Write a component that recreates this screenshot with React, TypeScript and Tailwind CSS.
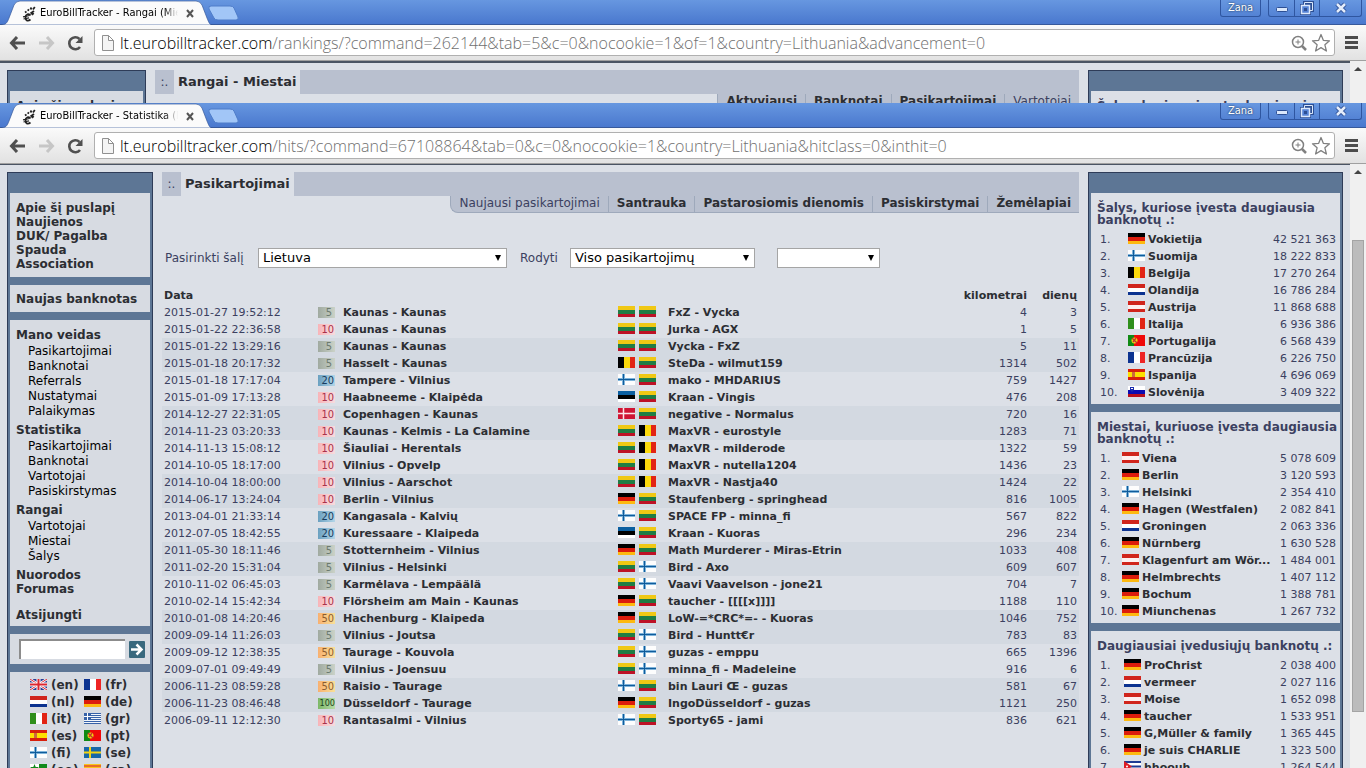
import React from 'react';

const flags: Record<string, React.ReactNode> = {
  lt: (
    <>
      <rect width="17" height="4" fill="#f0c814" />
      <rect y="4" width="17" height="4" fill="#1f7d44" />
      <rect y="8" width="17" height="3" fill="#bd1226" />
    </>
  ),
  be: (
    <>
      <rect width="6" height="11" fill="#000" />
      <rect x="6" width="6" height="11" fill="#fbd80b" />
      <rect x="12" width="5" height="11" fill="#e22414" />
    </>
  ),
  fi: (
    <>
      <rect width="17" height="11" fill="#fdfdfd" />
      <path d="M0 5.5h17M5.5 0v11" stroke="#7fb4da" strokeWidth="3" />
      <path d="M0 5.5h17M5.5 0v11" stroke="#0f5c9c" />
    </>
  ),
  ee: (
    <>
      <rect width="17" height="4" fill="#0b5fa0" />
      <rect y="4" width="17" height="4" fill="#000" />
      <rect y="8" width="17" height="3" fill="#fff" />
    </>
  ),
  dk: (
    <>
      <rect width="17" height="11" fill="#cf1433" />
      <path d="M0 5.5h17M5.5 0v11" stroke="#fbe4e8" strokeWidth="1.5" />
    </>
  ),
  de: (
    <>
      <rect width="17" height="4" fill="#000" />
      <rect y="4" width="17" height="4" fill="#dc1c0c" />
      <rect y="8" width="17" height="3" fill="#fdb910" />
    </>
  ),
  nl: (
    <>
      <rect width="17" height="4" fill="#d0251c" />
      <rect y="4" width="17" height="4" fill="#fff" />
      <rect y="8" width="17" height="3" fill="#0c3390" />
    </>
  ),
  at: (
    <>
      <rect width="17" height="4" fill="#d0251c" />
      <rect y="4" width="17" height="4" fill="#fdf0f0" />
      <rect y="8" width="17" height="3" fill="#d0251c" />
    </>
  ),
  it: (
    <>
      <rect width="6" height="11" fill="#2f8f1c" />
      <rect x="6" width="6" height="11" fill="#fff" />
      <rect x="12" width="5" height="11" fill="#e22414" />
    </>
  ),
  fr: (
    <>
      <rect width="6" height="11" fill="#0c3390" />
      <rect x="6" width="6" height="11" fill="#fff" />
      <rect x="12" width="5" height="11" fill="#ee2424" />
    </>
  ),
  es: (
    <>
      <rect width="17" height="11" fill="#d8200c" />
      <rect y="3" width="17" height="5" fill="#fde000" />
      <rect x="4" y="3" width="3" height="5" fill="#cc6a3c" />
    </>
  ),
  pt: (
    <>
      <rect width="17" height="11" fill="#f00808" />
      <rect width="6" height="11" fill="#108a14" />
      <circle cx="6.5" cy="5.5" r="3" fill="#f2d010" />
      <path d="M4 3l5 5M5 7l3-4" stroke="#c43030" strokeWidth="1.3" />
    </>
  ),
  si: (
    <>
      <rect width="17" height="4" fill="#fff" />
      <rect y="4" width="17" height="4" fill="#0b0bb0" />
      <rect y="8" width="17" height="3" fill="#b8101c" />
      <path d="M2 1h4v3l-2 2-2-2z" fill="#1b2cae" />
      <rect x="3" y="2" width="2" height="1" fill="#fff" />
    </>
  ),
  en: (
    <>
      <rect width="17" height="11" fill="#2b3f94" />
      <path d="M0 0l17 11M17 0L0 11" stroke="#fff" strokeWidth="2.4" />
      <path d="M0 0l17 11M17 0L0 11" stroke="#dc2630" />
      <path d="M0 5.5h17M8.5 0v11" stroke="#fff" strokeWidth="4" />
      <path d="M0 5.5h17M8.5 0v11" stroke="#dc2630" strokeWidth="2" />
    </>
  ),
  gr: (
    <>
      <rect width="17" height="11" fill="#f2f6fb" />
      <path d="M0 .5h17M0 2.5h17M0 4.5h17M0 6.5h17M0 8.5h17M0 10.5h17" stroke="#3862a8" />
      <rect width="7" height="7" fill="#3862a8" />
      <path d="M0 3.5h7M3.5 0v7" stroke="#fff" />
    </>
  ),
  se: (
    <>
      <rect width="17" height="11" fill="#1767a8" />
      <path d="M0 5.5h17M6 0v11" stroke="#f4d414" strokeWidth="2" />
    </>
  ),
  eo: (
    <>
      <rect width="17" height="11" fill="#128a1c" />
      <rect width="9" height="8" fill="#fff" />
      <path d="M4.5 0l1.2 3H9L6.5 5l1 3-3-2-3 2 1-3L0 3h3.300z" fill="#128a1c" />
    </>
  ),
  ca: (
    <>
      <rect width="17" height="11" fill="#f8c41c" />
      <path d="M0 2h17M0 5h17M0 8h17" stroke="#e2502c" strokeWidth="1.5" />
    </>
  ),
  cu: (
    <>
      <rect width="17" height="11" fill="#fff" />
      <path d="M0 1h17M0 5.5h17M0 10h17" stroke="#1c3c94" strokeWidth="2" />
      <path d="M0 0l8 5.5L0 11z" fill="#dc1c24" />
      <circle cx="3" cy="5.5" r="1" fill="#fff" />
    </>
  ),
};

const Flag = ({ code }: { code: string }) => (
  <svg width="17" height="11" viewBox="0 0 17 11" className="block shrink-0">
    {flags[code]}
  </svg>
);

const noteStyles: Record<number, string> = {
  5: 'from-[#a0aaa0] to-[#cad2c8] text-[#6c7a70] pr-[3px]',
  10: 'from-[#f8b4b8] to-[#f6dcdf] text-[#a8324c] pr-px',
  20: 'from-[#6aa0c0] to-[#b4d6e8] text-[#173c60] pr-px',
  50: 'from-[#f8b070] to-[#f8e098] text-[#8c5c30] pr-px',
  100: 'from-[#7cb868] to-[#b8dca8] text-[#1c4420]',
};

const Note = ({ value }: { value: number }) => (
  <span
    className={`block h-[11px] w-[17px] bg-linear-to-r text-right font-['DejaVu_Sans_Condensed','DejaVu_Sans',sans-serif] leading-[11px] ${value === 100 ? 'text-[9px]' : 'text-[11px]'} ${noteStyles[value]}`}
  >
    {value}
  </span>
);

const hits: [string, number, string, string, string, string, number, number][] = [
  ['2015-01-27 19:52:12', 5, 'Kaunas - Kaunas', 'lt', 'lt', 'FxZ - Vycka', 4, 3],
  ['2015-01-22 22:36:58', 10, 'Kaunas - Kaunas', 'lt', 'lt', 'Jurka - AGX', 1, 5],
  ['2015-01-22 13:29:16', 5, 'Kaunas - Kaunas', 'lt', 'lt', 'Vycka - FxZ', 5, 11],
  ['2015-01-18 20:17:32', 5, 'Hasselt - Kaunas', 'be', 'lt', 'SteDa - wilmut159', 1314, 502],
  ['2015-01-18 17:17:04', 20, 'Tampere - Vilnius', 'fi', 'lt', 'mako - MHDARIUS', 759, 1427],
  ['2015-01-09 17:13:28', 10, 'Haabneeme - Klaipėda', 'ee', 'lt', 'Kraan - Vingis', 476, 208],
  ['2014-12-27 22:31:05', 10, 'Copenhagen - Kaunas', 'dk', 'lt', 'negative - Normalus', 720, 16],
  ['2014-11-23 03:20:33', 10, 'Kaunas - Kelmis - La Calamine', 'lt', 'be', 'MaxVR - eurostyle', 1283, 71],
  ['2014-11-13 15:08:12', 10, 'Šiauliai - Herentals', 'lt', 'be', 'MaxVR - milderode', 1322, 59],
  ['2014-10-05 18:17:00', 10, 'Vilnius - Opvelp', 'lt', 'be', 'MaxVR - nutella1204', 1436, 23],
  ['2014-10-04 18:00:00', 10, 'Vilnius - Aarschot', 'lt', 'be', 'MaxVR - Nastja40', 1424, 22],
  ['2014-06-17 13:24:04', 10, 'Berlin - Vilnius', 'de', 'lt', 'Staufenberg - springhead', 816, 1005],
  ['2013-04-01 21:33:14', 20, 'Kangasala - Kalvių', 'fi', 'lt', 'SPACE FP - minna_fi', 567, 822],
  ['2012-07-05 18:42:55', 20, 'Kuressaare - Klaipeda', 'ee', 'lt', 'Kraan - Kuoras', 296, 234],
  ['2011-05-30 18:11:46', 5, 'Stotternheim - Vilnius', 'de', 'lt', 'Math Murderer - Miras-Etrin', 1033, 408],
  ['2011-02-20 15:31:04', 5, 'Vilnius - Helsinki', 'lt', 'fi', 'Bird - Axo', 609, 607],
  ['2010-11-02 06:45:03', 5, 'Karmėlava - Lempäälä', 'lt', 'fi', 'Vaavi Vaavelson - jone21', 704, 7],
  ['2010-02-14 15:42:34', 10, 'Flörsheim am Main - Kaunas', 'de', 'lt', 'taucher - [[[[x]]]]', 1188, 110],
  ['2010-01-08 14:20:46', 50, 'Hachenburg - Klaipeda', 'de', 'lt', 'LoW-=*CRC*=- - Kuoras', 1046, 752],
  ['2009-09-14 11:26:03', 5, 'Vilnius - Joutsa', 'lt', 'fi', 'Bird - Huntt€r', 783, 83],
  ['2009-09-12 12:38:35', 50, 'Taurage - Kouvola', 'lt', 'fi', 'guzas - emppu', 665, 1396],
  ['2009-07-01 09:49:49', 5, 'Vilnius - Joensuu', 'lt', 'fi', 'minna_fi - Madeleine', 916, 6],
  ['2006-11-23 08:59:28', 50, 'Raisio - Taurage', 'fi', 'lt', 'bin Lauri Œ - guzas', 581, 67],
  ['2006-11-23 08:46:48', 100, 'Düsseldorf - Taurage', 'de', 'lt', 'IngoDüsseldorf - guzas', 1121, 250],
  ['2006-09-11 12:12:30', 10, 'Rantasalmi - Vilnius', 'fi', 'lt', 'Sporty65 - jami', 836, 621],
];

type Ranking = { title: string; flagCol: string; rows: [string, string, string][] };

const rankings: Ranking[] = [
  {
    title: 'Šalys, kuriose įvesta daugiausia banknotų .:',
    flagCol: 'w-7',
    rows: [
      ['de', 'Vokietija', '42 521 363'],
      ['fi', 'Suomija', '18 222 833'],
      ['be', 'Belgija', '17 270 264'],
      ['nl', 'Olandija', '16 786 284'],
      ['at', 'Austrija', '11 868 688'],
      ['it', 'Italija', '6 936 386'],
      ['pt', 'Portugalija', '6 568 439'],
      ['fr', 'Prancūzija', '6 226 750'],
      ['es', 'Ispanija', '4 696 069'],
      ['si', 'Slovėnija', '3 409 322'],
    ],
  },
  {
    title: 'Miestai, kuriuose įvesta daugiausia banknotų .:',
    flagCol: 'w-[22px]',
    rows: [
      ['at', 'Viena', '5 078 609'],
      ['de', 'Berlin', '3 120 593'],
      ['fi', 'Helsinki', '2 354 410'],
      ['de', 'Hagen (Westfalen)', '2 082 841'],
      ['nl', 'Groningen', '2 063 336'],
      ['de', 'Nürnberg', '1 630 528'],
      ['at', 'Klagenfurt am Wör...', '1 484 001'],
      ['de', 'Helmbrechts', '1 407 112'],
      ['de', 'Bochum', '1 388 781'],
      ['de', 'Miunchenas', '1 267 732'],
    ],
  },
  {
    title: 'Daugiausiai įvedusiųjų banknotų .:',
    flagCol: 'w-6',
    rows: [
      ['de', 'ProChrist', '2 038 400'],
      ['nl', 'vermeer', '2 027 116'],
      ['at', 'Moise', '1 652 098'],
      ['de', 'taucher', '1 533 951'],
      ['de', 'G,Müller & family', '1 365 445'],
      ['de', 'je suis CHARLIE', '1 323 500'],
      ['cu', 'hhoouh', '1 264 544'],
    ],
  },
];

const menu = [
  { title: 'Mano veidas', items: ['Pasikartojimai', 'Banknotai', 'Referrals', 'Nustatymai', 'Palaikymas'] },
  { title: 'Statistika', items: ['Pasikartojimai', 'Banknotai', 'Vartotojai', 'Pasiskirstymas'] },
  { title: 'Rangai', items: ['Vartotojai', 'Miestai', 'Šalys'] },
];

const languages = ['en', 'fr', 'nl', 'de', 'it', 'gr', 'es', 'pt', 'fi', 'se', 'eo', 'ca'];

const BrowserChrome = ({ title, path }: { title: string; path: string }) => (
  <header className="shrink-0 font-['DejaVu_Sans_Condensed','DejaVu_Sans',sans-serif]">
    <div className="flex h-[25px] justify-between border-b border-[#37599b] bg-linear-to-b from-[#6797e0] to-[#4a78ce]">
      <div className="flex">
        <div className="relative h-[25px] w-[212px]">
          <svg width="212" height="25" viewBox="0 0 212 25" className="absolute inset-0">
            <path d="M0 25C6 25 7 23 9 18L14 5Q16 1 20 1H196Q200 1 202 5L207 18C209 23 210 25 212 25z" fill="#fbfbfb" stroke="#37599b" strokeWidth=".7" />
          </svg>
          <div className="relative flex h-full items-center pt-0.5 pl-[22px]">
            <svg width="14" height="16" viewBox="0 0 14 16" fill="none" stroke="#222">
              <path d="M8.500 9.500C7 7 3.500 8 3.500 11.500S6 15.500 8.500 13.500" strokeWidth="1.800" />
              <path d="M1 10.800l6.500-1.300M1.500 13l5.500-1.200" strokeWidth="1.200" />
              <path d="M3 6.500l1.500-1M5.800 4.800l1-1.500M8.500 3.500l1-2M11 3.500l1.800-2.500" strokeWidth="1.800" />
              <path d="M8.500 7.500l3.500-2.500M10 9l1.500-2" strokeWidth="2" />
            </svg>
            <span className="ml-1 w-[138px] overflow-hidden mask-r-from-90% text-[11px] whitespace-nowrap text-black">
              {title}
            </span>
            <button aria-label="Close tab" className="ml-1.5">
              <svg width="12" height="9" viewBox="0 0 12 9" stroke="#555" strokeWidth="2">
                <path d="M3 1l6 7M9 1L3 8" />
              </svg>
            </button>
          </div>
        </div>
        <button aria-label="New tab" className="-ml-1 pt-0.5">
          <svg width="32" height="16" viewBox="0 0 32 16">
            <path d="M3 1H22Q25 1 26 3L30 12Q31 15 28 15H10Q7 15 6 13L1 4Q0 1 3 1z" fill="#a2c6f7" stroke="#4f7dc9" />
          </svg>
        </button>
      </div>
      <div className="flex h-[17px] gap-[7px] pr-1 text-white">
        <button className="w-[41px] rounded-b-[3px] border border-t-0 border-[#2f56a0] text-[11px] leading-4 [text-shadow:0_0_2px_#123]">
          Zana
        </button>
        <div className="flex rounded-b-[3px] border border-t-0 border-[#2f56a0]">
          <button aria-label="Minimize" className="flex w-[25px] items-center justify-center">
            <svg width="12" height="10" viewBox="0 0 12 10">
              <rect x=".5" y="4.500" width="11" height="4" rx="1" fill="#dbe8fb" stroke="#2c4f94" />
            </svg>
          </button>
          <button aria-label="Restore" className="flex w-[26px] items-center justify-center border-x border-[#2f56a0]">
            <svg width="14" height="14" viewBox="0 0 14 14" fill="none">
              <path d="M4.500 1.500h8v8h-8zM1.500 4.500h8v8h-8z" stroke="#2c4f94" strokeWidth="3" />
              <path d="M4.500 1.500h8v8h-8z" stroke="#dbe8fb" />
              <path d="M1.500 4.500h8v8h-8z" fill="#5583d6" stroke="#dbe8fb" strokeWidth="1.500" />
              <path d="M4 7h3v3H4z" fill="#2c4f94" />
            </svg>
          </button>
          <button aria-label="Close" className="flex w-[41px] items-center justify-center">
            <svg width="12" height="12" viewBox="0 0 12 12">
              <path d="M2 2l8 8M10 2l-8 8" stroke="#2c4f94" strokeWidth="4.500" />
              <path d="M2 2l8 8M10 2l-8 8" stroke="#e4edfb" strokeWidth="2.500" />
            </svg>
          </button>
        </div>
      </div>
    </div>
    <div className="flex h-9 items-center border-b border-[#a0a0a0] bg-linear-to-b from-[#fafafa] to-[#e2e2e2] pr-2 pl-[9px]">
      <button aria-label="Back">
        <svg width="17" height="14" viewBox="0 0 17 14" fill="none" stroke="#505050" strokeWidth="3">
          <path d="M16 7H3M8 1L2.500 7 8 13" />
        </svg>
      </button>
      <button aria-label="Forward" className="ml-3">
        <svg width="17" height="14" viewBox="0 0 17 14" fill="none" stroke="#c6c6c6" strokeWidth="3">
          <path d="M1 7h13M9 1l5.500 6L9 13" />
        </svg>
      </button>
      <button aria-label="Reload" className="ml-3">
        <svg width="18" height="16" viewBox="0 0 18 16">
          <path d="M13 12A6 6 0 1 1 12.500 4" fill="none" stroke="#505050" strokeWidth="2.600" />
          <path d="M15.500 1v7h-7z" fill="#505050" />
        </svg>
      </button>
      <div className="ml-[9px] flex h-[27px] min-w-0 flex-1 items-center rounded-[3px] border border-[#b0b0b0] bg-white px-[7px]">
        <svg width="12" height="16" viewBox="0 0 12 16" fill="#f4f4f4" stroke="#909090">
          <path d="M.5.5h6l5 5v10H.5zM6.500.5v5h5" />
        </svg>
        <p className="ml-1.5 flex-1 truncate font-['Open_Sans',sans-serif] text-[16px] leading-6 font-light text-[#707070]">
          <span className="text-black">lt.eurobilltracker.com</span>
          {path}
        </p>
        <svg width="16" height="16" viewBox="0 0 16 16" fill="none" stroke="#808080">
          <circle cx="7" cy="7" r="5.500" strokeWidth="1.500" />
          <path d="M11 11l4 4" strokeWidth="2.500" />
          <path d="M4.500 7h5M7 4.500v5" />
        </svg>
        <svg width="20" height="19" viewBox="0 0 20 19" fill="none" stroke="#808080" strokeWidth="1.300" className="-mr-1 ml-1">
          <path d="M10 1.500l2.300 5.800 6.200.5-4.600 4 1.500 6.200-5.400-3.400L4.600 18l1.500-6.200-4.600-4 6.200-.5z" strokeLinejoin="round" />
        </svg>
      </div>
      <button aria-label="Menu" className="ml-2.5">
        <svg width="13" height="13" viewBox="0 0 13 13" stroke="#4c4c4c" strokeWidth="3">
          <path d="M0 1.500h13M0 6.500h13M0 11.500h13" />
        </svg>
      </button>
    </div>
  </header>
);

const ScrollBar = ({ thumb }: { thumb?: boolean }) => (
  <div className="flex w-4 shrink-0 flex-col items-center bg-[#f0f0f0]">
    <svg width="8" height="4" viewBox="0 0 8 4" className="mt-1.5 shrink-0">
      <path d="M4 0l4 4H0z" fill="#444" />
    </svg>
    {thumb && <div className="mt-[66px] h-[472px] w-3 border border-[#a4a4a4] bg-[#bcbcbc]" />}
  </div>
);

type TitleProps = { title: string; tabs: { label: string; active?: boolean }[] };

const TitleBar = ({ title, tabs }: TitleProps) => (
  <div className="flex flex-col items-end">
    <div className="flex h-6 w-full items-center gap-1">
      <span className="h-6 w-[19px] bg-[#b9c0cf] text-center leading-6 text-[#3b4060]">:.</span>
      <h1 className="text-[13px] font-bold text-[#2c2e33]">{title}</h1>
      <span className="h-6 flex-1 bg-[#b9c0cf]" />
    </div>
    <nav className="flex h-[17px] rounded-bl-lg border-b border-l border-[#9ea9bb] bg-[#b9c0cf] leading-[15px]">
      {tabs.map((tab, index) => (
        <a
          key={index}
          href="#"
          className={`h-4 border-[#9ea9bb] px-2 not-first:border-l ${tab.active ? 'text-[#3b4060]' : 'font-bold text-[#2c2e33]'}`}
        >
          {tab.label}
        </a>
      ))}
    </nav>
  </div>
);

const Arrow = () => (
  <svg width="8" height="6" viewBox="0 0 8 6" className="pointer-events-none absolute top-[7px] right-[5px]">
    <path d="M1 0h6L4 6z" fill="#000" />
  </svg>
);

const App: React.FC = () => {
  return (
    <div className="flex h-screen flex-col overflow-hidden bg-[#dce0e7] font-['DejaVu_Sans',sans-serif] text-[12px] text-[#3b4060]">
      <section className="flex h-[103px] shrink-0 flex-col overflow-hidden">
        <BrowserChrome
          title="EuroBillTracker - Rangai (Miestai)"
          path="/rankings/?command=262144&tab=5&c=0&nocookie=1&of=1&country=Lithuania&advancement=0"
        />
        <div className="flex min-h-0 flex-1">
          <div className="flex min-w-0 flex-1 items-start border-t-2 border-[#4a5463] px-[7px] pt-[7px]">
            <aside className="w-[139px] shrink-0 border border-[#2e3c58] bg-[#5d7695] px-0.5 pt-5">
              <div className="bg-[#d7dbe2] px-1.5 pt-2 leading-[14px] font-bold text-[#2c2e33]">
                <a href="#">Apie šį puslapį</a>
              </div>
            </aside>
            <main className="mx-[9px] min-w-0 flex-1">
              <TitleBar
                title="Rangai - Miestai"
                tabs={[
                  { label: 'Aktyviausi' },
                  { label: 'Banknotai' },
                  { label: 'Pasikartojimai' },
                  { label: 'Vartotojai', active: true },
                ]}
              />
            </main>
            <aside className="w-[255px] shrink-0 border border-[#2e3c58] bg-[#5d7695] px-0.5 pt-5">
              <h2 className="bg-[#dce0e7] pt-[9px] pl-1.5 leading-3 font-bold">
                Šalys, kuriose įvesta daugiausia banknotų .:
              </h2>
            </aside>
          </div>
          <ScrollBar />
        </div>
      </section>

      <section className="flex min-h-0 flex-1 flex-col">
        <BrowserChrome
          title="EuroBillTracker - Statistika (Pasikartojimai)"
          path="/hits/?command=67108864&tab=0&c=0&nocookie=1&country=Lithuania&hitclass=0&inthit=0"
        />
        <div className="flex min-h-0 flex-1 overflow-hidden">
          <div className="flex min-w-0 flex-1 items-start border-t border-[#4a5463] px-[7px] pt-[7px]">
            <aside className="flex w-[146px] shrink-0 flex-col gap-2 border border-[#2e3c58] bg-[#5d7695] px-0.5 pt-5 leading-[14px]">
              <nav className="flex flex-col bg-[#d7dbe2] px-1.5 pt-2 pb-1.5 font-bold text-[#2c2e33]">
                {['Apie šį puslapį', 'Naujienos', 'DUK/ Pagalba', 'Spauda', 'Association'].map((item) => (
                  <a key={item} href="#">{item}</a>
                ))}
              </nav>
              <a href="#" className="bg-[#d7dbe2] px-1.5 pt-[7px] pb-1.5 font-bold whitespace-nowrap text-[#2c2e33]">
                Naujas banknotas
              </a>
              <nav className="flex flex-col bg-[#d7dbe2] px-1.5 pt-2 pb-1 font-bold text-[#2c2e33]">
                {menu.map((group) => (
                  <div key={group.title}>
                    <a href="#" className="block">{group.title}</a>
                    <ul className="pt-0.5 pb-1 pl-3 leading-[15px] font-normal text-black">
                      {group.items.map((item) => (
                        <li key={item}><a href="#">{item}</a></li>
                      ))}
                    </ul>
                  </div>
                ))}
                <a href="#">Nuorodos</a>
                <a href="#">Forumas</a>
                <a href="#" className="mt-3">Atsijungti</a>
              </nav>
              <form className="flex items-center gap-1 bg-[#d7dbe2] py-[5px] pl-[9px]">
                <input
                  type="text"
                  aria-label="Paieška"
                  className="h-5 w-[106px] border-t-2 border-l-2 border-[#8c8c8c] bg-white"
                />
                <button type="button" aria-label="Ieškoti">
                  <svg width="16" height="17" viewBox="0 0 16 17">
                    <rect width="16" height="17" rx="1" fill="#39697e" />
                    <path d="M2 8.500h10M7.500 3.500l5 5-5 5" fill="none" stroke="#fff" strokeWidth="2.500" />
                  </svg>
                </button>
              </form>
              <div className="grid grid-cols-[54px_1fr] bg-[#d7dbe2] pt-1 pl-5 font-bold text-[#2c2e33]">
                {languages.map((lang) => (
                  <a key={lang} href="#" className="flex h-[17px] items-center gap-1">
                    <Flag code={lang} />
                    ({lang})
                  </a>
                ))}
              </div>
            </aside>

            <main className="mx-[9px] min-w-0 flex-1">
              <TitleBar
                title="Pasikartojimai"
                tabs={[
                  { label: 'Naujausi pasikartojimai', active: true },
                  { label: 'Santrauka' },
                  { label: 'Pastarosiomis dienomis' },
                  { label: 'Pasiskirstymai' },
                  { label: 'Žemėlapiai' },
                ]}
              />
              <form className="mt-[35px] flex h-5 items-center pl-[3px]">
                <label htmlFor="country" className="w-[93px]">Pasirinkti šalį</label>
                <div className="relative">
                  <select id="country" className="h-5 w-[249px] appearance-none border border-[#a5a5a5] bg-white px-1 text-[13px] leading-[18px] text-black">
                    <option>Lietuva</option>
                  </select>
                  <Arrow />
                </div>
                <label htmlFor="show" className="ml-[13px] w-[50px]">Rodyti</label>
                <div className="relative">
                  <select id="show" className="h-5 w-[185px] appearance-none border border-[#a5a5a5] bg-white px-1 text-[13px] leading-[18px] text-black">
                    <option>Viso pasikartojimų</option>
                  </select>
                  <Arrow />
                </div>
                <div className="relative ml-[22px]">
                  <select aria-label="Nominalas" className="h-5 w-[103px] appearance-none border border-[#a5a5a5] bg-white px-1 text-[13px] text-black">
                    <option></option>
                  </select>
                  <Arrow />
                </div>
              </form>

              <table className="mt-5 w-full table-fixed text-[11px] leading-4">
                <thead>
                  <tr className="h-4 text-[#2c2e33]">
                    <th className="w-[156px] pl-0.5 text-left">Data</th>
                    <th className="w-[25px]" />
                    <th className="w-[275px]" />
                    <th className="w-[50px]" />
                    <th />
                    <th className="w-[90px] text-right">kilometrai</th>
                    <th className="w-[52px] pr-0.5 text-right">dienų</th>
                  </tr>
                </thead>
                <tbody>
                  {hits.map(([date, note, cities, from, to, users, km, days]) => (
                    <tr key={date} className="h-[17px] nth-[4n]:bg-[#d3d9e1] nth-[4n+3]:bg-[#d3d9e1]">
                      <td className="pt-px pl-0.5">{date}</td>
                      <td><Note value={note} /></td>
                      <td className="pt-px font-bold text-[#2c2e33]"><a href="#">{cities}</a></td>
                      <td className="pb-0.5">
                        <div className="flex gap-1">
                          <Flag code={from} />
                          <Flag code={to} />
                        </div>
                      </td>
                      <td className="pt-px font-bold text-[#2c2e33]"><a href="#">{users}</a></td>
                      <td className="pt-px text-right">{km}</td>
                      <td className="pt-px pr-0.5 text-right">{days}</td>
                    </tr>
                  ))}
                </tbody>
              </table>
            </main>

            <aside className="flex w-[255px] shrink-0 flex-col gap-2 border border-[#2e3c58] bg-[#5d7695] px-0.5 pt-5">
              {rankings.map((ranking) => (
                <div key={ranking.title} className="bg-[#dce0e7] pt-[9px] pb-[3px]">
                  <h2 className="mb-[5px] pl-1.5 leading-3 font-bold">{ranking.title}</h2>
                  <div className="pr-1 pl-[9px]">
                    <table className="w-full text-[11px] leading-4">
                      <tbody>
                        {ranking.rows.map(([code, name, value], index) => (
                          <tr key={name} className="h-[17px]">
                            <td className="pt-px">
                              <div className={ranking.flagCol}>{index + 1}.</div>
                            </td>
                            <td className="pr-[3px] pb-0.5"><Flag code={code} /></td>
                            <td className="w-full pt-px font-bold whitespace-nowrap text-[#2c2e33]"><a href="#">{name}</a></td>
                            <td className="pt-px text-right whitespace-nowrap">{value}</td>
                          </tr>
                        ))}
                      </tbody>
                    </table>
                  </div>
                </div>
              ))}
            </aside>
          </div>
          <ScrollBar thumb />
        </div>
      </section>
    </div>
  );
};

export default App;
